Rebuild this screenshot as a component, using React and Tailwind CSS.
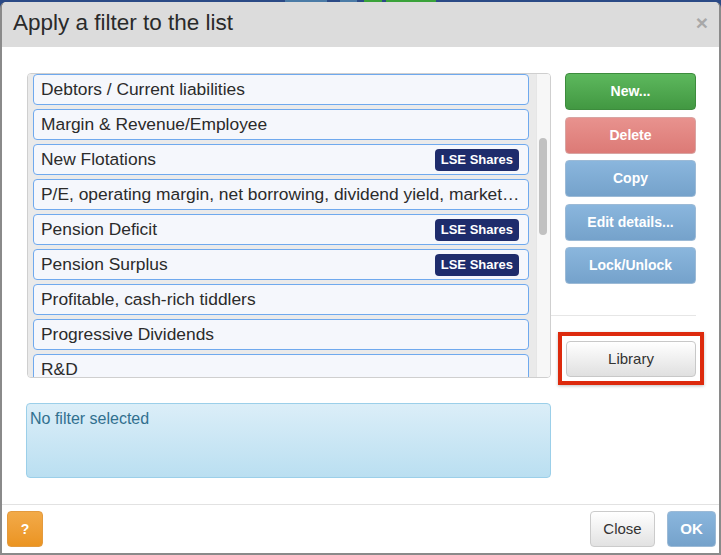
const filters = [
  { name: 'Debtors / Current liabilities' },
  { name: 'Margin & Revenue/Employee' },
  { name: 'New Flotations', tag: 'LSE Shares' },
  { name: 'P/E, operating margin, net borrowing, dividend yield, market capitalisation and growth' },
  { name: 'Pension Deficit', tag: 'LSE Shares' },
  { name: 'Pension Surplus', tag: 'LSE Shares' },
  { name: 'Profitable, cash-rich tiddlers' },
  { name: 'Progressive Dividends' },
  { name: 'R&D' },
];

const actions = [
  { label: 'New...', cls: 'bg-gradient-to-b from-[#5db85d] to-[#429842] border-[#3d8c3d]' },
  { label: 'Delete', cls: 'bg-gradient-to-b from-[#e8928e] to-[#dc7a76] border-[#d8a4a2]' },
  { label: 'Copy', cls: 'bg-gradient-to-b from-[#8ab6dd] to-[#75a2cb] border-[#9cbad6]' },
  { label: 'Edit details...', cls: 'bg-gradient-to-b from-[#8ab6dd] to-[#75a2cb] border-[#9cbad6]' },
  { label: 'Lock/Unlock', cls: 'bg-gradient-to-b from-[#8ab6dd] to-[#75a2cb] border-[#9cbad6]' },
];

const FilterRow = ({ name, tag }) => (
  <div className="flex items-center h-[31px] shrink-0 rounded-[4px] border border-[#6fa9ee] bg-[#f5f7fc] pl-[7px] pr-[5px]">
    <span className="flex-1 truncate text-[17.4px] text-[#2b2b2b]">{name}</span>
    {tag && (
      <span className="ml-2 mr-[4px] h-[22px] flex items-center rounded-[4px] bg-[#1e2c6c] px-[6px] text-[13px] font-bold text-white">
        {tag}
      </span>
    )}
  </div>
);

const App = () => {
  return (
    <div className="w-[721px] h-[555px] bg-[#2b4a86] overflow-hidden" style={{ fontFamily: '"Liberation Sans", Arial, sans-serif' }}>
      <div className="flex h-[2px]">
        <div className="w-[285px]" />
        <div className="w-[42px] bg-[#4b7ba6]" />
        <div className="w-[13px]" />
        <div className="w-[17px] bg-[#4b7ba6]" />
        <div className="w-[7px]" />
        <div className="w-[18px] bg-[#3aa23a]" />
        <div className="w-[4px]" />
        <div className="w-[50px] bg-[#3aa23a]" />
      </div>

      <div className="h-[553px] flex flex-col bg-white border-2 border-t-0 border-[#8a8a8a] rounded-t-[6px] overflow-hidden">
        {/* header */}
        <div className="h-[45px] shrink-0 flex items-center justify-between bg-[#dcdcdc] pl-[11px] pr-[11px]">
          <h3 className="text-[22.5px] text-[#2a2a2a] leading-none -mt-[2px]">Apply a filter to the list</h3>
          <span className="text-[21px] font-bold text-[#a8a8a8] leading-none -mt-[4px]">×</span>
        </div>

        {/* body */}
        <div className="flex-1 flex pl-[25px] pt-[26px]">
          <div className="w-[524px] flex flex-col">
            <div className="h-[305px] flex rounded-[4px] border border-[#cfcfcf] overflow-hidden">
              <div className="flex-1 flex flex-col gap-[4px] bg-[#eaeaea] pl-[5px] pr-[7px] overflow-hidden">
                {filters.map((f) => (
                  <FilterRow key={f.name} {...f} />
                ))}
              </div>
              <div className="w-[14px] bg-[#f7f7f7] border-l border-[#e6e6e6] pl-[2px] pt-[64px]">
                <div className="w-[8px] h-[97px] rounded-full bg-[#c1c1c1]" />
              </div>
            </div>

            <div className="mt-[25px] -ml-px h-[75px] rounded-[4px] border border-[#9bcfe9] bg-gradient-to-b from-[#dbeef8] to-[#badff1] pl-[3px] pt-[4px] text-[16px] leading-[22px] text-[#31708f]">
              No filter selected
            </div>
          </div>

          <div className="w-[145px] flex flex-col">
            <div className="flex flex-col gap-[6.5px] pl-[14px]">
              {actions.map((a) => (
                <button
                  key={a.label}
                  className={`h-[37px] rounded-[4px] border text-[14px] font-bold text-white ${a.cls}`}
                >
                  {a.label}
                </button>
              ))}
            </div>
            <div className="mt-[31px] h-px bg-[#e6e6e6]" />
            <div className="relative mt-[25px] ml-[15px]">
              <button className="w-full h-[36px] rounded-[4px] border border-[#c8c8c8] bg-gradient-to-b from-white to-[#e0e0e0] text-[15px] text-[#333]">
                Library
              </button>
              <span className="absolute -left-[8px] -right-[8px] -top-[9px] -bottom-[8px] border-[4px] border-[#dd2a0d] shadow-[0_1px_3px_rgba(0,0,0,0.25)]" />
            </div>
          </div>
        </div>

        {/* footer */}
        <div className="h-[49px] shrink-0 flex items-center justify-between border-t border-[#e2e2e2] pl-[5px] pr-[3px]">
          <button className="w-[36px] h-[36px] rounded-[4px] border border-[#e39a3e] bg-gradient-to-b from-[#f2aa48] to-[#eb9420] text-[14px] font-bold text-white">
            ?
          </button>
          <div className="flex gap-[12px]">
            <button className="w-[65px] h-[36px] rounded-[4px] border border-[#cbcbcb] bg-gradient-to-b from-white to-[#e2e2e2] text-[15px] text-[#333]">
              Close
            </button>
            <button className="w-[49px] h-[36px] rounded-[4px] border border-[#9cbad6] bg-gradient-to-b from-[#8ab6dd] to-[#75a2cb] text-[15px] font-bold text-white">
              OK
            </button>
          </div>
        </div>
      </div>
    </div>
  );
};

export default App;
